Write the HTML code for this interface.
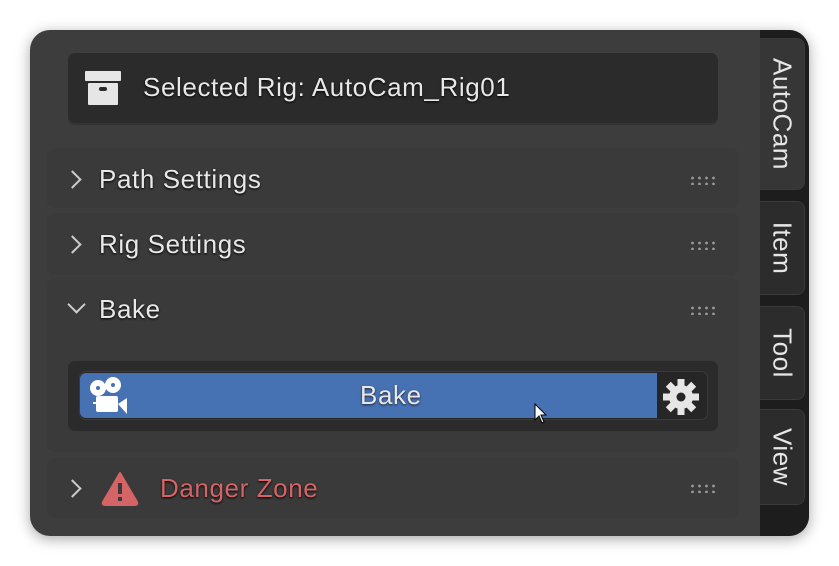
<!DOCTYPE html>
<html><head><style>
*{margin:0;padding:0;box-sizing:border-box}
body{width:839px;height:566px;background:#fff;font-family:"Liberation Sans",sans-serif;position:relative;overflow:hidden}
.win{position:absolute;left:30px;top:30px;width:779px;height:506px;border-radius:20px;background:#3d3d3d;overflow:hidden;box-shadow:0 3px 14px rgba(0,0,0,.35)}
.strip{position:absolute;left:730px;top:0;width:49px;height:506px;background:#1d1d1d}
.tab{position:absolute;left:730px;width:45px;background:#2c2c2c;border:1px solid #3a3a3a;border-left:none;border-radius:0 8px 8px 0;color:#e6e6e6;font-size:26px;letter-spacing:0.5px}
.tab span{position:absolute;left:50%;top:50%;transform:translate(-50%,-50%) rotate(90deg);white-space:nowrap}
.t{position:absolute;color:#e8e8e8;font-size:26px;letter-spacing:0.6px;text-shadow:0 1px 2px #000}
.pnl{position:absolute;left:17px;width:692px;background:#3a3a3a;border-radius:8px}
.dots{position:absolute;width:28px;height:10px;background-image:radial-gradient(circle,#999 1.2px,transparent 1.6px);background-size:7px 6px}
.chev{position:absolute;width:13px;height:13px;border-right:2px solid #ccc;border-top:2px solid #ccc;transform:rotate(45deg)}
</style></head><body>
<div class="win">
 <div class="strip"></div>
 <div class="tab" style="top:8px;height:152px;background:#363636"><span>AutoCam</span></div>
 <div class="tab" style="top:171px;height:94px"><span>Item</span></div>
 <div class="tab" style="top:276px;height:94px"><span>Tool</span></div>
 <div class="tab" style="top:379px;height:96px"><span>View</span></div>

 <div style="position:absolute;left:38px;top:23px;width:650px;height:70px;background:#2b2b2b;border-radius:7px;box-shadow:0 2px 0 #333"></div>
 <svg style="position:absolute;left:55px;top:41px" width="36" height="34"><rect x="0" y="0" width="36" height="10" rx="1" fill="#e6e6e6"/><rect x="3" y="12" width="30" height="22" rx="1" fill="#e6e6e6"/><rect x="14" y="16" width="8" height="4" rx="2" fill="#2b2b2b"/></svg>
 <div class="t" style="left:113px;top:42px">Selected Rig: AutoCam_Rig01</div>

 <div class="pnl" style="top:118px;height:60px"></div>
 <div class="chev" style="left:36px;top:143px"></div>
 <div class="t" style="left:69px;top:134px">Path Settings</div>
 <div class="dots" style="left:659px;top:145px"></div>

 <div class="pnl" style="top:183px;height:62px"></div>
 <div class="chev" style="left:36px;top:208px"></div>
 <div class="t" style="left:69px;top:199px">Rig Settings</div>
 <div class="dots" style="left:659px;top:210px"></div>

 <div class="pnl" style="top:248px;height:174px"></div>
 <div class="chev" style="left:40px;top:268px;transform:rotate(135deg)"></div>
 <div class="t" style="left:69px;top:264px">Bake</div>
 <div class="dots" style="left:659px;top:275px"></div>
 <div style="position:absolute;left:38px;top:331px;width:650px;height:70px;background:#2b2b2b;border-radius:7px"></div>
 <div style="position:absolute;left:49px;top:341px;width:629px;height:49px;background:#262626;border-radius:7px;border:1px solid #3a3a3a"></div>
 <div style="position:absolute;left:50px;top:343px;width:577px;height:45px;background:#4671b2;border-radius:6px 0 0 6px"></div>
 <svg style="position:absolute;left:58px;top:346px" width="40" height="38"><circle cx="10" cy="12" r="8" fill="#fff"/><circle cx="25" cy="9" r="8" fill="#fff"/><circle cx="10" cy="12" r="2" fill="#4671b2"/><circle cx="25" cy="9" r="2" fill="#4671b2"/><rect x="8" y="20" width="22" height="16" rx="2" fill="#fff"/><path d="M30 28 L39 22 V38 Z" fill="#fff"/><rect x="5" y="26" width="4" height="2" fill="#fff"/></svg>
 <div class="t" style="left:330px;top:350px;text-shadow:0 1px 2px #223">Bake</div>
 <svg style="position:absolute;left:633px;top:349px" width="36" height="36" viewBox="-18 -18 36 36"><g fill="#e6e6e6"><circle r="12"/><rect x="-3.5" y="-18" width="7" height="36"/><rect x="-3.5" y="-18" width="7" height="36" transform="rotate(45)"/><rect x="-3.5" y="-18" width="7" height="36" transform="rotate(90)"/><rect x="-3.5" y="-18" width="7" height="36" transform="rotate(135)"/></g><circle r="4.5" fill="#262626"/></svg>
 <svg style="position:absolute;left:504px;top:373px" width="14" height="22"><path d="M1 1 V17 L5 13 L8 20 L10 19 L7 12 L12 12 Z" fill="#fff" stroke="#000" stroke-width="1"/></svg>

 <div class="pnl" style="top:428px;height:60px"></div>
 <div class="chev" style="left:36px;top:452px"></div>
 <svg style="position:absolute;left:71px;top:440px" width="38" height="36"><path d="M19 3 L36 32 Q37 35 34 35 H4 Q1 35 2 32 Z" fill="#d46466" stroke="#d46466" stroke-width="2" stroke-linejoin="round"/><rect x="17" y="13" width="4" height="11" fill="#3a3a3a"/><rect x="17" y="27" width="4" height="4" fill="#3a3a3a"/></svg>
 <div class="t" style="left:130px;top:443px;color:#d46466">Danger Zone</div>
 <div class="dots" style="left:659px;top:453px"></div>
</div>
</body></html>
